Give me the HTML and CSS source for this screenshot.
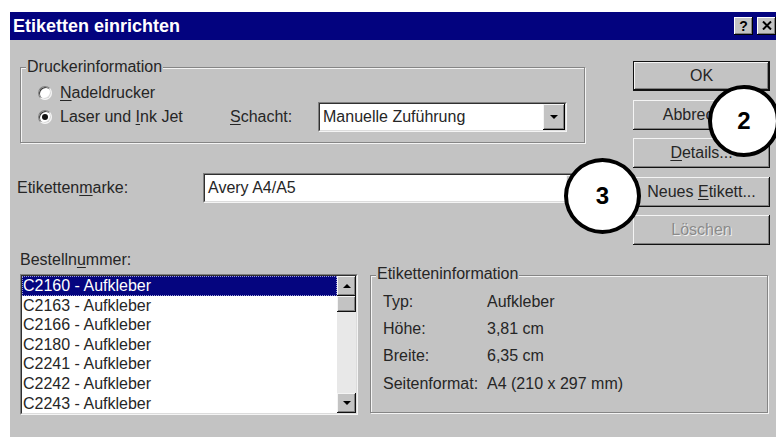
FILE: index.html
```html
<!DOCTYPE html>
<html lang="de">
<head>
<meta charset="utf-8">
<title>Etiketten einrichten</title>
<link rel="stylesheet" href="styles.css">
</head>
<body>
<div class="dialog">
  <div class="titlebar">
    <span class="title">Etiketten einrichten</span>
    <div class="caption-buttons">
      <span class="cap-btn help">?</span>
      <span class="cap-btn close">
        <svg width="10" height="9" viewBox="0 0 10 9"><path d="M1 0.5L9 8.5M9 0.5L1 8.5" stroke="#000" stroke-width="2" fill="none"/></svg>
      </span>
    </div>
  </div>

  <div class="client">
    <div class="upper">
      <div class="main-col">
        <div class="group printer">
          <div class="group-title">Druckerinformation</div>
          <div class="radio-row first">
            <span class="radio"></span>
            <span class="radio-label"><u>N</u>adeldrucker</span>
          </div>
          <div class="radio-row second">
            <span class="radio checked"></span>
            <span class="radio-label">Laser und <u>I</u>nk Jet</span>
            <span class="tray-label"><u>S</u>chacht:</span>
            <div class="combo tray">
              <div class="combo-inner">
                <span class="combo-value">Manuelle Zuführung</span>
                <span class="combo-btn">
                  <svg width="8" height="4" viewBox="0 0 8 4"><path d="M0 0H8L4 4Z" fill="#000"/></svg>
                </span>
              </div>
            </div>
          </div>
        </div>

        <div class="brand-row">
          <span class="brand-label">Etiketten<u>m</u>arke:</span>
          <div class="combo brand">
            <div class="combo-inner">
              <span class="combo-value">Avery A4/A5</span>
              <span class="combo-btn">
                <svg width="8" height="4" viewBox="0 0 8 4"><path d="M0 0H8L4 4Z" fill="#000"/></svg>
              </span>
            </div>
          </div>
        </div>
      </div>

      <div class="buttons">
        <div class="btn default">OK</div>
        <div class="btn">Abbrechen</div>
        <div class="btn"><span><u>D</u>etails...</span></div>
        <div class="btn"><span>Neues <u>E</u>tikett...</span></div>
        <div class="btn disabled">Löschen</div>
      </div>
    </div>

    <div class="lower">
      <div class="list-col">
        <div class="list-label">Bestelln<u>u</u>mmer:</div>
        <div class="listbox">
          <div class="listbox-inner">
            <ul class="items">
              <li class="selected">C2160 - Aufkleber</li>
              <li>C2163 - Aufkleber</li>
              <li>C2166 - Aufkleber</li>
              <li>C2180 - Aufkleber</li>
              <li>C2241 - Aufkleber</li>
              <li>C2242 - Aufkleber</li>
              <li>C2243 - Aufkleber</li>
            </ul>
            <div class="scrollbar">
              <span class="sb-btn">
                <svg width="8" height="4" viewBox="0 0 8 4"><path d="M0 4H8L4 0Z" fill="#000"/></svg>
              </span>
              <span class="sb-thumb"></span>
              <span class="sb-track"></span>
              <span class="sb-btn">
                <svg width="8" height="4" viewBox="0 0 8 4"><path d="M0 0H8L4 4Z" fill="#000"/></svg>
              </span>
            </div>
          </div>
        </div>
      </div>

      <div class="group info">
        <div class="group-title">Etiketteninformation</div>
        <dl class="info-rows">
          <div class="info-row"><dt>Typ:</dt><dd>Aufkleber</dd></div>
          <div class="info-row"><dt>Höhe:</dt><dd>3,81 cm</dd></div>
          <div class="info-row"><dt>Breite:</dt><dd>6,35 cm</dd></div>
          <div class="info-row"><dt>Seitenformat:</dt><dd>A4 (210 x 297 mm)</dd></div>
        </dl>
      </div>
    </div>

    <div class="callout callout-2">2</div>
    <div class="callout callout-3">3</div>
  </div>
</div>
</body>
</html>
```

FILE: styles.css
```css
html, body {
  margin: 0;
  padding: 0;
}

body {
  width: 776px;
  height: 437px;
  overflow: hidden;
  background: #ffffff;
  font-family: "Liberation Sans", Arial, sans-serif;
  font-size: 16px;
  line-height: 18px;
  color: #262626;
}

u {
  text-decoration: underline;
  text-underline-offset: 2px;
}

/* window frame */
.dialog {
  margin: 12px 0 0 10px;
  width: 770px;
  height: 425px;
  background: #c3c3c3;
  display: flex;
  flex-direction: column;
}

.titlebar {
  flex: none;
  height: 28px;
  background: #03037f;
  display: flex;
  align-items: center;
  justify-content: space-between;
  padding: 0 4px 0 3px;
}

.title {
  color: #ffffff;
  font-weight: bold;
  font-size: 18px;
  line-height: 20px;
}

.caption-buttons {
  display: flex;
  gap: 4px;
}

.cap-btn {
  width: 19px;
  height: 18px;
  box-sizing: border-box;
  background: #c3c3c3;
  box-shadow: inset -1px -1px #000, inset 1px 1px #fff, inset -2px -2px #808080;
  display: flex;
  align-items: center;
  justify-content: center;
  font-weight: bold;
  font-size: 14px;
  line-height: 14px;
  color: #000;
  padding-bottom: 1px;
}

.client {
  position: relative;
  flex: 1;
  padding-left: 7px;
}

/* etched group box */
.group {
  box-sizing: border-box;
  border: 1px solid #858585;
  box-shadow: inset 1px 1px #f4f4f4, 1px 1px #f4f4f4;
}

.group-title {
  width: fit-content;
  background: #c3c3c3;
  padding: 0 1px;
  margin: -10px 0 0 5px;
  line-height: 18px;
}

.upper {
  display: flex;
  align-items: flex-start;
}

.main-col {
  width: 578px;
}

.printer {
  margin: 27px 0 0 3px;
  width: 565px;
  height: 76px;
}

.radio-row {
  display: flex;
  align-items: center;
  padding-left: 17px;
}

.radio-row.first {
  height: 18px;
  margin-top: 8px;
}

.radio-row.second {
  height: 30px;
}

.radio {
  position: relative;
  flex: none;
  width: 14px;
  height: 14px;
  box-sizing: border-box;
  border-radius: 50%;
  background: #ffffff;
  border: 1px solid;
  border-color: #808080 #f4f4f4 #f4f4f4 #808080;
  box-shadow: inset 1px 1px #3a3a3a, inset -1px -1px #d8d8d8;
  margin-right: 8px;
}

.radio.checked::after {
  content: "";
  position: absolute;
  left: 3px;
  top: 3px;
  width: 6px;
  height: 6px;
  border-radius: 50%;
  background: #111;
}

.radio-row.second .radio-label {
  width: 170px;
}

.tray-label {
  width: 88px;
}

/* sunken combo box */
.combo {
  box-sizing: border-box;
  height: 30px;
  border: 1px solid;
  border-color: #808080 #f4f4f4 #f4f4f4 #808080;
}

.combo-inner {
  box-sizing: border-box;
  height: 100%;
  border: 1px solid;
  border-color: #303030 #dcdcdc #dcdcdc #303030;
  background: #ffffff;
  display: flex;
  align-items: center;
}

.combo-value {
  flex: 1;
  padding-left: 3px;
}

.combo-btn {
  align-self: stretch;
  width: 22px;
  box-sizing: border-box;
  background: #c3c3c3;
  box-shadow: inset -1px -1px #000, inset 1px 1px #f4f4f4, inset -2px -2px #808080;
  display: flex;
  align-items: center;
  justify-content: center;
}

.tray {
  width: 249px;
}

.brand-row {
  display: flex;
  align-items: center;
  margin-top: 30px;
  height: 30px;
}

.brand-label {
  width: 186px;
}

.brand {
  flex: none;
  width: 387px;
}

/* command buttons */
.buttons {
  margin: 21px 0 0 38px;
  width: 137px;
  display: flex;
  flex-direction: column;
  gap: 8.5px;
}

.btn {
  box-sizing: border-box;
  height: 30px;
  background: #c3c3c3;
  box-shadow: inset -1px -1px #111, inset 1px 1px #f4f4f4, inset -2px -2px #808080;
  display: flex;
  align-items: center;
  justify-content: center;
}

.btn.default {
  border: 1px solid #111;
}

.btn.disabled {
  color: #8a8a8a;
  text-shadow: 1px 1px #f0f0f0;
}

/* lower half */
.lower {
  display: flex;
  align-items: flex-start;
  margin-top: 3px;
}

.list-col {
  margin-left: 3px;
}

.list-label {
  margin-top: 3px;
  line-height: 18px;
}

.listbox {
  margin-top: 5px;
  width: 338px;
  height: 141px;
  box-sizing: border-box;
  border: 1px solid;
  border-color: #808080 #f4f4f4 #f4f4f4 #808080;
}

.listbox-inner {
  box-sizing: border-box;
  height: 100%;
  border: 1px solid;
  border-color: #303030 #dcdcdc #dcdcdc #303030;
  background: #ffffff;
  display: flex;
}

.items {
  flex: 1;
  list-style: none;
  margin: 0;
  padding: 0;
}

.items li {
  height: 19.6px;
  line-height: 19.6px;
  padding-left: 1px;
  box-sizing: border-box;
}

.items li.selected {
  background: #05057f;
  color: #ffffff;
  outline: 1px dotted #9a9ad8;
  outline-offset: -1px;
}

.scrollbar {
  width: 19px;
  display: flex;
  flex-direction: column;
}

.sb-btn,
.sb-thumb {
  box-sizing: border-box;
  background: #c3c3c3;
  box-shadow: inset -1px -1px #111, inset 1px 1px #f4f4f4, inset -2px -2px #808080;
}

.sb-btn {
  height: 20px;
  display: flex;
  align-items: center;
  justify-content: center;
}

.sb-thumb {
  height: 16px;
}

.sb-track {
  flex: 1;
  background: #e8e8e8;
}

.info {
  margin: 27px 0 0 12px;
  width: 398px;
  height: 138px;
}

.info .group-title {
  margin-top: -11px;
}

.info-rows {
  margin: 5px 0 0 0;
  padding-left: 12px;
}

.info-row {
  display: flex;
  height: 27.3px;
  align-items: center;
}

.info-row dt {
  width: 104px;
}

.info-row dd {
  margin: 0;
}

/* numbered callouts laid over the dialog */
.callout {
  position: absolute;
  box-sizing: border-box;
  border: 4px solid #000;
  border-radius: 50%;
  background: #ffffff;
  display: flex;
  align-items: center;
  justify-content: center;
  font-weight: bold;
  font-size: 24px;
  color: #000;
}

.callout-2 {
  left: 698px;
  top: 45px;
  width: 72px;
  height: 72px;
}

.callout-3 {
  left: 554px;
  top: 118px;
  width: 77px;
  height: 76px;
}
```
